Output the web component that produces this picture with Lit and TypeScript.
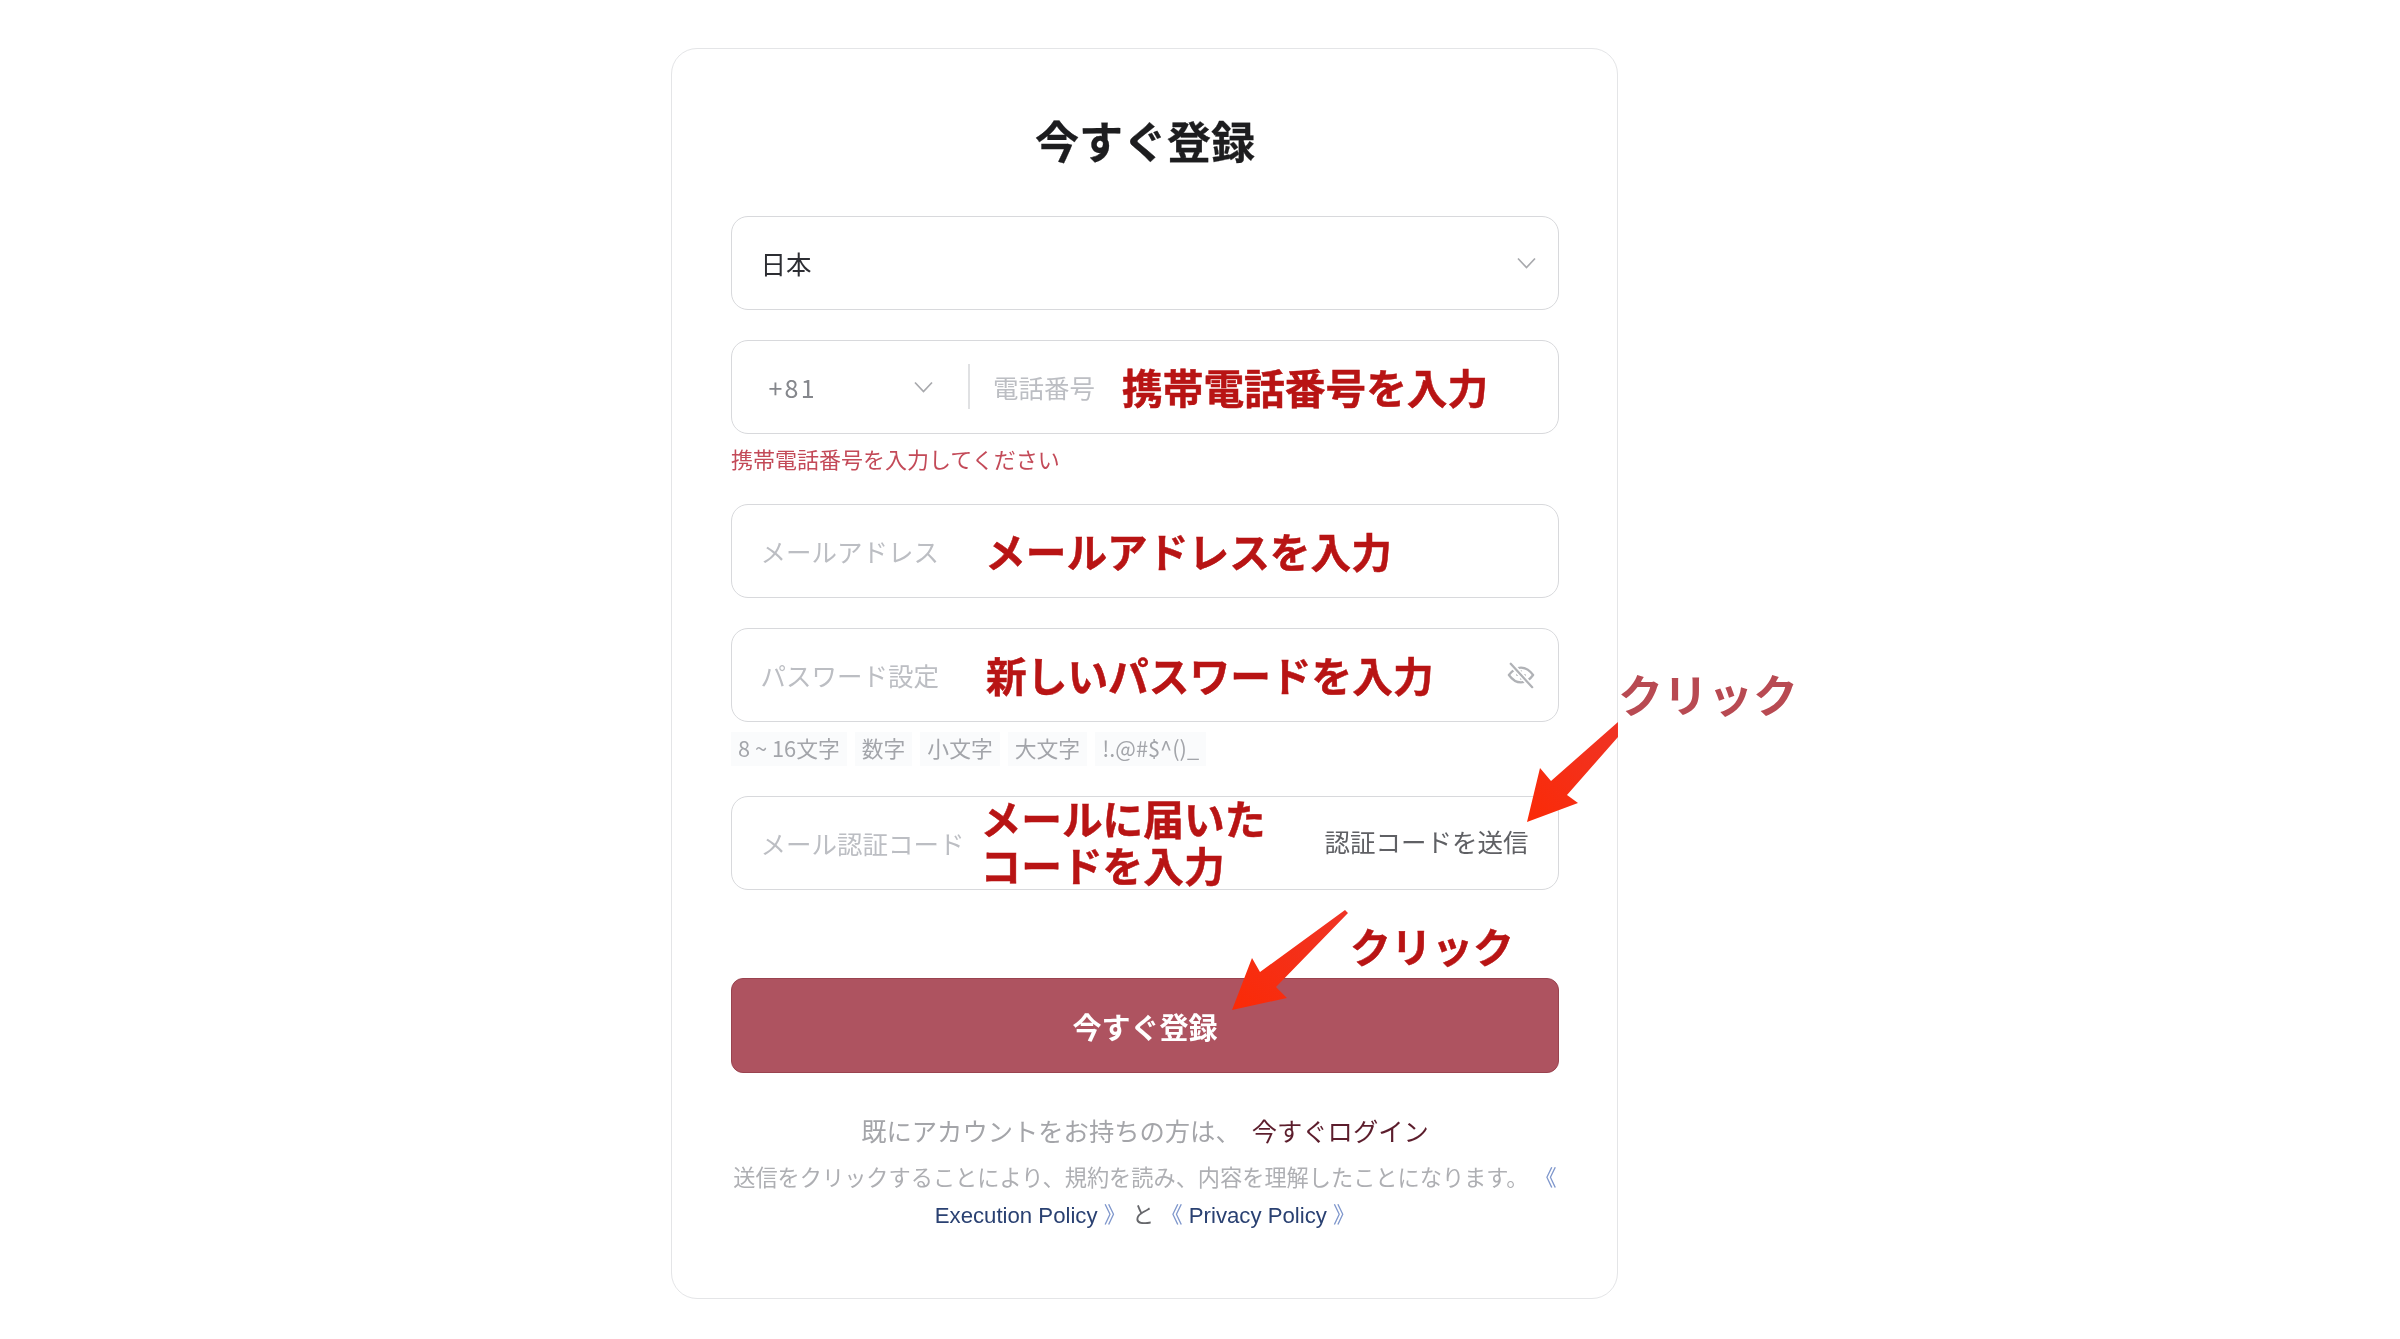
import { LitElement, html, css, svg } from "lit";
import { customElement } from "lit/decorators.js";

const chevron = html`<svg class="chev" viewBox="0 0 19 12" fill="none"><path d="M1 1.5 L9.5 10.5 L18 1.5" /></svg>`;

@customElement("app-root")
export class AppRoot extends LitElement {
  static styles = css`
    :host {
      display: block;
      position: relative;
      width: 2400px;
      height: 1339px;
      background: #fff;
      overflow: hidden;
      font-family: "Noto Sans CJK JP", sans-serif;
      filter: blur(0.65px);
    }
    .page {
      padding: 48px 0 0 671px;
    }
    .card {
      box-sizing: border-box;
      width: 947px;
      height: 1251px;
      border: 1.5px solid #e4e5e7;
      border-radius: 26px;
      padding: 61px 58px 0 59px;
      display: flex;
      flex-direction: column;
    }
    h1 {
      margin: 0 0 45.5px;
      font-size: 44px;
      line-height: 60px;
      font-weight: 700;
      color: #1d1d1f;
      text-align: center;
      height: 60px;
      -webkit-text-stroke: 0.3px #1d1d1f;
    }
    .field {
      box-sizing: border-box;
      height: 94px;
      border: 1.5px solid #d8d9dc;
      border-radius: 17px;
      display: flex;
      align-items: center;
      padding: 0 22px 0 28.5px;
      font-size: 25.5px;
      flex: none;
      white-space: nowrap;
    }
    .gap { margin-top: 30px; }
    .chev { width: 19px; height: 12px; flex: none; }
    .chev path { stroke: #a8a9ad; stroke-width: 1.7; }
    .value { color: #2d2e33; }
    .ph { color: #bcbec3; }
    .push { margin-left: auto; }
    .cc {
      box-sizing: border-box;
      width: 172.5px;
      padding-left: 8px;
      display: flex;
      justify-content: space-between;
      align-items: center;
      color: #85878c;
      letter-spacing: 2.2px;
      font-size: 25px;
    }
    .divider {
      width: 2px;
      height: 45px;
      background: #e0e1e3;
      margin: 0 23px 0 35px;
      flex: none;
    }
    .note {
      color: #b81414;
      font-weight: 700;
      font-size: 40.7px;
      line-height: 47px;
      -webkit-text-stroke: 0.5px #b81414;
    }
    .n-phone { margin-left: 27px; }
    .n-mail { margin-left: 46px; }
    .n-pass { margin-left: 47px; }
    .n-code { margin-left: 16px; transform: translateY(-2px); }
    .error {
      margin: 9px 0 31px;
      font-size: 22px;
      line-height: 30px;
      color: #c34a58;
      height: 30px;
    }
    .tags {
      display: flex;
      gap: 8px;
      margin: 10px 0 30px;
      height: 34px;
      flex: none;
    }
    .tag {
      background: #fafbfc;
      color: #a3a5aa;
      font-size: 21.8px;
      line-height: 32px;
      padding: 0 7px;
      white-space: nowrap;
    }
    .eye { width: 28px; height: 28px; flex: none; margin-right: 1px; }
    .eye path { fill: none; stroke: #b0b2b6; stroke-width: 2.4; stroke-linecap: round; stroke-linejoin: round; }
    .eye path.halo { stroke: #fff; stroke-width: 6; }
    .send { color: #5f6064; margin-right: 7.5px; padding-bottom: 4px; }
    .submit {
      margin-top: 88px;
      height: 95px;
      flex: none;
      box-sizing: border-box;
      background: #ae5360;
      border: 1px solid #99434f;
      border-radius: 12px;
      color: #fff;
      font-size: 29px;
      font-weight: 700;
      display: flex;
      align-items: center;
      justify-content: center;
      padding-top: 1px;
    }
    .login {
      margin-top: 39px;
      text-align: center;
      font-size: 25.3px;
      line-height: 36px;
      color: #a4a5a9;
      height: 36px;
    }
    .login a { color: #5c1d2c; margin-left: 11px; }
    .terms {
      margin-top: 12px;
      text-align: center;
      font-size: 22.2px;
      line-height: 37px;
      color: #aeafb3;
      font-family: "Liberation Sans", "Noto Sans CJK JP", sans-serif;
    }
    .terms a { color: #2a4172; }
    .terms i { font-style: normal; color: #7f97cc; }
    .terms .and { color: #66676b; }
    .click {
      position: absolute;
      font-weight: 700;
      white-space: nowrap;
    }
    .click-a { left: 1618px; top: 664px; font-size: 45px; line-height: 60px; color: #b84a52; }
    .click-b { left: 1350px; top: 917px; font-size: 41px; line-height: 56px; color: #b81414; -webkit-text-stroke: 0.5px #b81414; }
    .arrows { position: absolute; left: 0; top: 0; width: 2400px; height: 1339px; pointer-events: none; }
  `;

  render() {
    return html`
      <div class="page">
        <div class="card">
          <h1>今すぐ登録</h1>
          <div class="field"><span class="value">日本</span><span class="push"></span>${chevron}</div>
          <div class="field gap">
            <div class="cc"><span>+81</span>${chevron}</div>
            <span class="divider"></span>
            <span class="ph">電話番号</span>
            <span class="note n-phone">携帯電話番号を入力</span>
          </div>
          <div class="error">携帯電話番号を入力してください</div>
          <div class="field">
            <span class="ph">メールアドレス</span>
            <span class="note n-mail">メールアドレスを入力</span>
          </div>
          <div class="field gap">
            <span class="ph">パスワード設定</span>
            <span class="note n-pass">新しいパスワードを入力</span>
            <span class="push"></span>
            <svg class="eye" viewBox="0 0 30 30">
              <path d="M2 15 C7 8.5 11 7 15 7 C20 7 24 9.5 28 15 C24 20.5 20 23 15 23 C10 23 6 20.5 2 15 Z" />
              <path d="M11 15 A4 4 0 0 1 15 11 M19 15 A4 4 0 0 1 15 19" />
              <path class="halo" d="M6 5 L25 26" />
              <path d="M4 3 L27 28" />
            </svg>
          </div>
          <div class="tags">
            <span class="tag">8 ~ 16文字</span>
            <span class="tag">数字</span>
            <span class="tag">小文字</span>
            <span class="tag">大文字</span>
            <span class="tag">!.@#$^()_</span>
          </div>
          <div class="field">
            <span class="ph">メール認証コード</span>
            <span class="note n-code">メールに届いた<br />コードを入力</span>
            <span class="push"></span>
            <span class="send">認証コードを送信</span>
          </div>
          <div class="submit">今すぐ登録</div>
          <div class="login">既にアカウントをお持ちの方は、<a>今すぐログイン</a></div>
          <div class="terms">
            送信をクリックすることにより、規約を読み、内容を理解したことになります。
            <a><i>《</i> Execution Policy <i>》</i></a>
            <span class="and">と</span>
            <a><i>《</i> Privacy Policy <i>》</i></a>
          </div>
        </div>
      </div>
      <span class="click click-a">クリック</span>
      <span class="click click-b">クリック</span>
      <svg class="arrows" viewBox="0 0 2400 1339">
        <defs>
          <linearGradient id="g" x1="0" y1="1" x2="1" y2="0">
            <stop offset="0" stop-color="#fb2a06" />
            <stop offset="1" stop-color="#ef3426" />
          </linearGradient>
        </defs>
        ${svg`<polygon fill="url(#g)" points="1527,822 1540,768 1551,781 1618,722 1618,737 1567,795 1578,803" />`}
        ${svg`<polygon fill="url(#g)" points="1232,1010 1252,958 1260,972 1345,910 1348,913 1276,987 1287,998" />`}
      </svg>
    `;
  }
}
